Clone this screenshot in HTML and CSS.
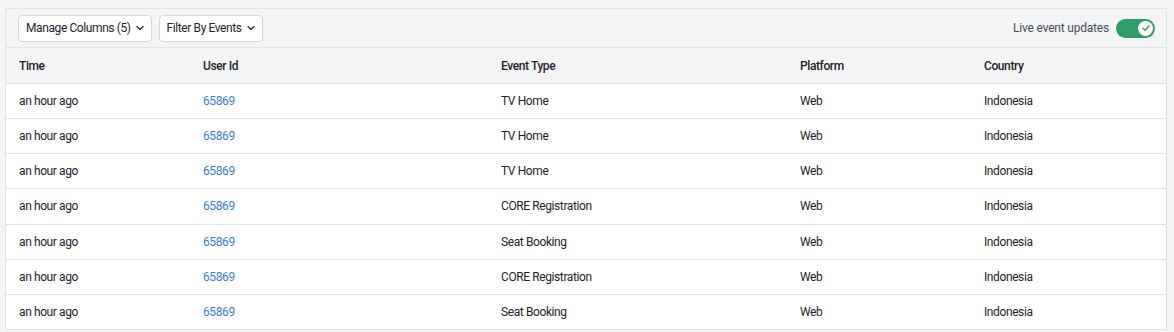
FILE: index.html
```html
<!DOCTYPE html>
<html lang="en">
<head>
    <meta charset="UTF-8">
    <meta name="viewport" content="width=device-width, initial-scale=1.0">
    <title>Live Events</title>
    <link rel="stylesheet" href="styles.css">
</head>
<body>
    <div class="panel">
        <div class="toolbar">
            <div class="toolbar-left">
                <button class="dropdown">Manage Columns (5)
                    <svg class="chev" width="10" height="10" viewBox="0 0 10 10"><path d="M2 3.5l3 3 3-3" fill="none" stroke="#333" stroke-width="1.4" stroke-linecap="round" stroke-linejoin="round"/></svg>
                </button>
                <button class="dropdown">Filter By Events
                    <svg class="chev" width="10" height="10" viewBox="0 0 10 10"><path d="M2 3.5l3 3 3-3" fill="none" stroke="#333" stroke-width="1.4" stroke-linecap="round" stroke-linejoin="round"/></svg>
                </button>
            </div>
            <div class="live">
                <span>Live event updates</span>
                <div class="toggle">
                    <div class="knob">
                        <svg width="10" height="10" viewBox="0 0 10 10"><path d="M2 5.2l2 2 4-4.2" fill="none" stroke="#2e9d68" stroke-width="1.5" stroke-linecap="round" stroke-linejoin="round"/></svg>
                    </div>
                </div>
            </div>
        </div>
        <div class="table">
            <div class="row head">
                <div>Time</div><div>User Id</div><div>Event Type</div><div>Platform</div><div>Country</div>
            </div>
            <div class="row">
                <div>an hour ago</div><div><a href="#">65869</a></div><div>TV Home</div><div>Web</div><div>Indonesia</div>
            </div>
            <div class="row">
                <div>an hour ago</div><div><a href="#">65869</a></div><div>TV Home</div><div>Web</div><div>Indonesia</div>
            </div>
            <div class="row">
                <div>an hour ago</div><div><a href="#">65869</a></div><div>TV Home</div><div>Web</div><div>Indonesia</div>
            </div>
            <div class="row">
                <div>an hour ago</div><div><a href="#">65869</a></div><div>CORE Registration</div><div>Web</div><div>Indonesia</div>
            </div>
            <div class="row">
                <div>an hour ago</div><div><a href="#">65869</a></div><div>Seat Booking</div><div>Web</div><div>Indonesia</div>
            </div>
            <div class="row">
                <div>an hour ago</div><div><a href="#">65869</a></div><div>CORE Registration</div><div>Web</div><div>Indonesia</div>
            </div>
            <div class="row">
                <div>an hour ago</div><div><a href="#">65869</a></div><div>Seat Booking</div><div>Web</div><div>Indonesia</div>
            </div>
        </div>
    </div>
</body>
</html>
```

FILE: styles.css
```css
body {
    margin: 0;
    padding: 8px 7px 0 5px;
    background-color: #f4f5f7;
    font-family: Roboto, "Liberation Sans", sans-serif;
    font-size: 12px;
    color: #1f2328;
}
.panel {
    border: 1px solid #e1e3e6;
    border-bottom: none;
    background-color: #f3f4f6;
}
.toolbar {
    display: flex;
    justify-content: space-between;
    align-items: center;
    height: 38px;
    padding: 0 11px 0 12px;
    border-bottom: 1px solid #e1e3e6;
}
.toolbar-left {
    display: flex;
    gap: 7px;
}
.dropdown {
    display: flex;
    align-items: center;
    gap: 4px;
    height: 27px;
    padding: 0 6px 0 7px;
    background-color: #fff;
    border: 1px solid #d3d6da;
    border-radius: 4px;
    font-family: inherit;
    font-size: 12px;
    letter-spacing: -0.4px;
    color: #1f2328;
    cursor: pointer;
}
.live {
    display: flex;
    align-items: center;
    gap: 7px;
    color: #4a4f55;
    letter-spacing: -0.2px;
}
.toggle {
    width: 39px;
    height: 19px;
    border-radius: 10px;
    background-color: #2e9d68;
    display: flex;
    align-items: center;
    justify-content: flex-end;
    padding: 0 2px;
    box-sizing: border-box;
}
.knob {
    width: 15px;
    height: 15px;
    border-radius: 50%;
    background-color: #fff;
    display: flex;
    align-items: center;
    justify-content: center;
}
.table {
    background-color: #fff;
    letter-spacing: -0.4px;
}
.row {
    display: grid;
    grid-template-columns: 184px 298px 299px 184px 1fr;
    align-items: center;
    height: 35.15px;
    padding-left: 13px;
    border-bottom: 1px solid #dfe1e4;
    box-sizing: border-box;
}
.row.head {
    height: 36px;
    background-color: #f3f4f6;
    font-weight: 500;
}
a {
    color: #3a7bd5;
    text-decoration: none;
}
```
